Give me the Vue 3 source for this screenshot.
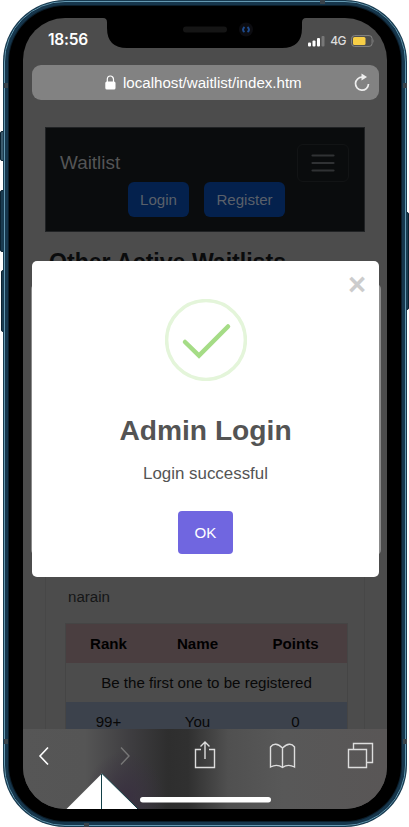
<script setup>
const rows = [{ rank: '99+', name: 'You', points: 0 }]
</script>

<template>
  <div class="stage">
    <i class="key mute"></i>
    <i class="key up"></i>
    <i class="key down"></i>
    <i class="key power"></i>
    <div class="phone">
      <i class="band t"></i><i class="band l1"></i><i class="band r1"></i><i class="band l2"></i><i class="band r2"></i><i class="band b"></i>
      <div class="rim">
        <div class="screen">
          <svg class="notch" width="204" height="30" viewBox="0 0 204 30">
            <path d="M0 0C3 0 4 1.500 4 4.500V10Q4 30 24 30H179Q199 30 199 10V4.500Q199 0 203 0Z" fill="#000" />
            <rect x="80" y="8.500" width="44" height="6" rx="3" fill="#151515" />
            <circle cx="143" cy="11.500" r="7" fill="#0c0c10" />
            <path d="M141.500 9q-3 3 0 5M144.500 9q3 3 0 5" stroke="#1d4a8c" stroke-width="2" fill="none" />
          </svg>
          <header class="status">
            <span class="time">18:56</span>
            <div class="signals">
              <svg width="17" height="12" viewBox="0 0 17 12">
                <rect x="0" y="7.500" width="3" height="4" rx="1" fill="#fff" />
                <rect x="4.500" y="5.500" width="3" height="6" rx="1" fill="#fff" />
                <rect x="9" y="3" width="3" height="8.500" rx="1" fill="#fff" />
                <rect x="13.500" y="1" width="3" height="10.500" rx="1" fill="#777" />
              </svg>
              <span class="net">4G</span>
              <svg width="24" height="12" viewBox="0 0 24 12">
                <rect x=".6" y=".6" width="20.500" height="10.800" rx="3" fill="none" stroke="#858585" />
                <rect x="2" y="2" width="12.500" height="8" rx="1.500" fill="#f7ce46" />
                <path d="M22.500 4q1.300 2 0 4z" fill="#858585" />
              </svg>
            </div>
          </header>
          <div class="address">
            <svg class="lock" width="11" height="15" viewBox="0 0 11 15">
              <rect x=".3" y="6.500" width="10.200" height="8" rx="1.500" fill="#fff" />
              <path d="M2.300 7V4.300a3.100 3.300 0 0 1 6.200 0V7" fill="none" stroke="#fff" stroke-width="1.200" />
            </svg>
            <span>localhost/waitlist/index.htm</span>
            <svg class="reload" width="16" height="19" viewBox="0 0 16 19">
              <path d="M8.500 4.200A6.500 6.500 0 1 0 14.500 11" fill="none" stroke="#eee" stroke-width="1.700" />
              <path d="M7.500 .5L13 4L7.500 7.500z" fill="#eee" />
            </svg>
          </div>
          <main class="page">
            <nav class="navbar">
              <div class="nav-row">
                <span class="brand">Waitlist</span>
                <div class="toggler">
                  <svg width="24" height="20" viewBox="0 0 24 20"><path d="M1.500 2.500H22.500M1.500 10H22.500M1.500 17.500H22.500" stroke="#303234" stroke-width="2.200" stroke-linecap="round" /></svg>
                </div>
              </div>
              <div class="nav-buttons"><span class="btn">Login</span><span class="btn wide">Register</span></div>
            </nav>
            <h2>Other Active Waitlists</h2>
            <section class="card">
              <p>narain</p>
              <table>
                <thead><tr><th>Rank</th><th>Name</th><th>Points</th></tr></thead>
                <tbody>
                  <tr class="empty"><td colspan="3">Be the first one to be registered</td></tr>
                  <tr v-for="r in rows" :key="r.rank" class="you"><td>{{ r.rank }}</td><td>{{ r.name }}</td><td>{{ r.points }}</td></tr>
                </tbody>
              </table>
            </section>
          </main>
          <footer class="toolbar">
            <svg width="364" height="80" viewBox="0 0 364 80" fill="none" stroke="#ddd" stroke-width="1.400">
              <path d="M25 18.500L17 27L25 35.500" stroke="#fff" stroke-width="1.600" />
              <path d="M98 18.500L106 27L98 35.500" stroke="#777" />
              <path d="M178 20.500H172.500V38.500H191.500V20.500H186M182 30V13M177.500 17.500L182 13L186.500 17.500" />
              <path d="M259.500 19Q252 12 247.500 18V38Q254 34.500 259.500 38.500Q265 34.500 271.500 38V18Q267 12 259.500 19V38.500" />
              <path d="M325.500 20.500H343.500V38.500H325.500ZM330.500 20V14.500H349.500V33.500H344" />
              <rect x="117" y="68" width="131" height="5.500" rx="2.750" fill="#fff" stroke="none" />
              <path d="M43.500 80L79 44.500L115 80Z" fill="#fff" stroke="none" />
              <path d="M78.500 45V80M79 44.500L115 80" stroke="#124047" stroke-width="1" />
            </svg>
          </footer>
        </div>
      </div>
    </div>
    <i class="scroll-edge"></i>
    <div class="modal">
      <span class="close">×</span>
      <svg class="check" width="82" height="82" viewBox="0 0 82 82" fill="none">
        <circle cx="41" cy="41" r="39.400" stroke="#e4f5da" stroke-width="3.500" />
        <path d="M20 43L34 56.500L63 27.500" stroke="#a5dc86" stroke-width="4.500" stroke-linecap="round" />
      </svg>
      <h1>Admin Login</h1>
      <p>Login successful</p>
      <button>OK</button>
    </div>
  </div>
</template>

<style>
body { margin: 0; background: #fff; overflow: hidden; }
</style>

<style scoped>
* { box-sizing: border-box; }
.stage { position: relative; width: 409px; height: 827px; padding: 0 2px 0 3px; font-family: "Liberation Sans", Arial, sans-serif; overflow: hidden; }
svg { display: block; flex: none; }
.phone { position: relative; height: 827px; padding: 1px; border-radius: 62px; background: #173a50; }
.rim { height: 825px; border-radius: 61px; border: 1px solid #6398b1; background: #000; box-shadow: inset 0 0 0 3px #16364c, inset 0 0 0 4px #0b1d2a; padding: 16px 18px; }
.screen { position: relative; width: 364px; height: 791px; display: flex; flex-direction: column; overflow: hidden; border-radius: 42px; background: #4c4c4c; }
.notch { position: absolute; top: 0; left: 80px; }
.key { position: absolute; background: #1b3c51; border: 1px solid #0b2231; border-radius: 2px 0 0 2px; }
.mute { left: 0; top: 131px; width: 5px; height: 30px; background: #3b5b6e; }
.up { left: 0; top: 190px; width: 5px; height: 62px; }
.down { left: 1px; top: 270px; width: 4px; height: 62px; }
.power { right: 0; top: 212px; width: 4px; height: 98px; border-radius: 0 2px 2px 0; }
.band { position: absolute; z-index: 1; background: #39434b; }
.t { left: 317px; top: 0; width: 5px; height: 4px; }
.b { left: 81px; bottom: 0; width: 5px; height: 4px; }
.l1, .l2 { left: 1px; width: 4px; height: 5px; }
.r1, .r2 { right: 0; width: 4px; height: 5px; }
.l1, .r1 { top: 83px; }
.l2, .r2 { top: 739px; }
.status { height: 47px; flex: none; display: flex; justify-content: space-between; align-items: flex-start; padding: 12px 12px 0 25px; color: #fff; }
.time { font: 600 15.500px/20px Inter, sans-serif; letter-spacing: -.2px; }
.signals { display: flex; align-items: center; gap: 5px; height: 21px; }
.net { font: 500 12px/16px Inter, sans-serif; letter-spacing: -.5px; color: #ddd; }
.address { position: relative; height: 35px; flex: none; margin: 0 8px 0 9px; border-radius: 9px; background: #828282; color: #fff; display: flex; align-items: center; padding-left: 73px; font-size: 15.100px; white-space: nowrap; }
.lock { margin-right: 7px; }
.reload { margin-left: auto; margin-right: 9px; }
.page { height: 629px; flex: none; overflow: hidden; padding: 27px 22px 0; }
.navbar { height: 105px; padding: 15px 15px 0 14px; background: #0a0c0d; border: 1px solid #202224; color: #545556; }
.nav-row { display: flex; justify-content: space-between; align-items: center; height: 39px; }
.brand { font-size: 18.900px; }
.toggler { width: 52px; height: 38px; border: 1px solid #121415; border-radius: 6px; display: grid; place-items: center; }
.nav-buttons { display: flex; gap: 15px; padding-left: 68px; }
.btn { width: 61px; height: 35px; border-radius: 6px; background: #04214d; color: #5a606a; font-size: 15.100px; line-height: 36px; text-align: center; }
.wide { width: 81px; }
h2 { margin: 16px 0 0 4px; font-size: 23.100px; line-height: 28px; height: 28px; color: #0a0b0c; white-space: nowrap; }
.card { height: 500px; margin-top: 10px; padding: 300px 18px 0 20px; border: 1px solid #474747; }
.card p { margin: 0 0 0 2px; font-size: 15.100px; line-height: 19px; height: 37px; color: #151617; }
table { width: 281px; border-collapse: collapse; table-layout: fixed; font-size: 15.100px; color: #080808; text-align: center; outline: 1px solid #454545; }
th { height: 39px; padding: 0; background: #4a3e40; color: #000; }
td { height: 39px; padding: 0; }
th:first-child { width: 85px; }
th:nth-child(2) { width: 93px; }
.you { background: #3c424c; }
.toolbar { height: 80px; flex: none; margin-top: auto; background: radial-gradient(ellipse 40px 48px at 102px 70px, #393040 0, #39304000 100%), linear-gradient(90deg, #565656 0, #555 62px, #3e3d40 108px, #2e2e2e 145px, #303030 165px, #505050 205px, #585858 260px, #595656 364px); }
.scroll-edge { position: absolute; left: 31px; top: 284px; width: 350px; height: 271px; border-radius: 5px; background: #8b8b8b; }
.modal { position: absolute; left: 32px; top: 261px; width: 347px; height: 316px; border-radius: 5px; background: #fff; display: flex; flex-direction: column; align-items: center; padding-top: 38px; color: #545454; }
.close { position: absolute; right: 13px; top: 6px; font: 700 31px/36px "Liberation Sans", sans-serif; color: #ccc; }
h1 { margin: 29px 0 0; font-size: 28.200px; line-height: 40px; white-space: nowrap; }
.modal p { margin: 13px 0 0; font-size: 16.900px; line-height: 22px; }
button { width: 55px; height: 43px; margin-top: 26px; padding: 0; border: 0; border-radius: 4px; background: #7066e0; color: #fff; font: 15.100px "Liberation Sans", sans-serif; }
</style>
